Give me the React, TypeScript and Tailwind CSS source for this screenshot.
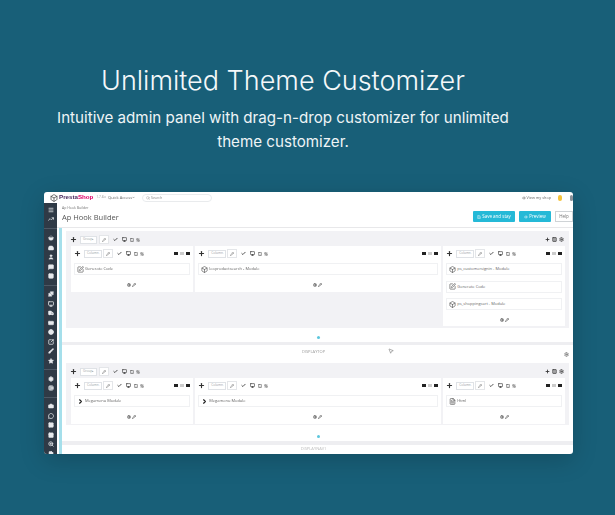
import { Check, ChevronDown, Cog, Eye, Monitor, Plus, Pencil, Save, Search, SquarePen, Tablet, ArrowUpDown, Box, ChevronRight, Settings, Menu, TrendingUp, ShoppingBasket, Inbox, User, MessageSquare, Table, Puzzle, Truck, CreditCard, Globe, SquareArrowOutUpRight, Brush, Star, Camera, MessageCircle, Image, Calendar, ZoomIn, FileText, Columns3, MousePointer2 } from 'lucide-react';
import type { ReactNode } from 'react';

const sidebar = [
  { icon: Menu, after: 0, solid: false },
  { icon: TrendingUp, after: 9, solid: false },
  { icon: ShoppingBasket, after: 0, solid: true },
  { icon: Inbox, after: 0, solid: true },
  { icon: User, after: 0, solid: true },
  { icon: MessageSquare, after: 0, solid: true },
  { icon: Table, after: 8, solid: true },
  { icon: Puzzle, after: 0, solid: true },
  { icon: Monitor, after: 0, solid: false },
  { icon: Truck, after: 0, solid: true },
  { icon: CreditCard, after: 0, solid: true },
  { icon: Globe, after: 0, solid: true },
  { icon: SquareArrowOutUpRight, after: 0, solid: false },
  { icon: Brush, after: 0, solid: true },
  { icon: Star, after: 8, solid: true },
  { icon: Settings, after: 0, solid: true },
  { icon: Cog, after: 8, solid: false },
  { icon: Camera, after: 0, solid: true },
  { icon: MessageCircle, after: 0, solid: false },
  { icon: Image, after: 0, solid: true },
  { icon: Calendar, after: 0, solid: true },
  { icon: ZoomIn, after: 0, solid: false },
  { icon: FileText, after: 0, solid: true },
  { icon: Table, after: 0, solid: true },
];

const Toolbar = ({ label, gap, pencil }: { label: string; gap: string; pencil: string }) => (
  <div className="flex items-center text-[#333]">
    <Plus size={7} strokeWidth={4} />
    <div className={`ml-[3px] flex h-[8px] items-center justify-between border border-[#dfe2e6] bg-white px-[2px] text-[3.2px] text-[#9a9fa5] ${gap}`}>
      {label}
      <ChevronDown size={3} strokeWidth={5} className="text-[#333]" />
    </div>
    <div className={`flex h-[9px] items-center justify-center border border-[#e4e6e9] bg-white ${pencil}`}>
      <Pencil size={4} />
    </div>
    <Check size={5} strokeWidth={4} className="ml-[4px]" />
    <Monitor size={5} strokeWidth={3} className="ml-[4px]" />
    <Tablet size={4} strokeWidth={3} className="ml-[3px]" />
    <ArrowUpDown size={4} strokeWidth={3} className="ml-[2px]" />
  </div>
);

const Row = ({ icon, children }: { icon: ReactNode; children: string }) => (
  <div className="flex h-[12px] items-center gap-px border border-[#f0f1f3] bg-white pl-[2px] text-[4px] font-medium text-[#666]">
    {icon}
    {children}
  </div>
);

const Column = ({ width, rows }: { width: string; rows: { icon: ReactNode; label: string }[] }) => (
  <div className={`flex flex-col bg-white px-[3px] pb-[2px] pt-[3px] ${width}`}>
    <div className="flex items-center justify-between">
      <Toolbar label="Column" gap="w-[18px]" pencil="ml-px w-[10px]" />
      <div className="flex items-center gap-[2px] text-[#222]">
        <div className="h-[3px] w-[4px] bg-[#222]" />
        <div className="h-[3px] w-[4px] bg-[#ccc]" />
        <div className="h-[3px] w-[4px] bg-[#222]" />
      </div>
    </div>
    <div className="mt-[5px] flex flex-col gap-[5.5px]">
      {rows.map((r, i) => (
        <Row key={i} icon={r.icon}>{r.label}</Row>
      ))}
    </div>
    <div className="mt-[8px] flex items-center justify-center gap-px pb-[2px] text-[#333]">
      <Settings size={4} strokeWidth={3} />
      <Pencil size={4} strokeWidth={3} />
    </div>
  </div>
);

const Group = ({ columns, className }: { columns: { width: string; rows: { icon: ReactNode; label: string }[] }[]; className: string }) => (
  <div className={`mx-[4px] bg-[#f2f2f5] px-[4px] pb-[2px] pt-[3px] ${className}`}>
    <div className="flex h-[11px] items-center justify-between pr-[1px]">
      <Toolbar label="Group" gap="w-[17px]" pencil="ml-[2px] w-[10px]" />
      <div className="flex items-center gap-[2px] text-[#333]">
        <Plus size={5} strokeWidth={4} />
        <Columns3 size={5} strokeWidth={3} />
        <Settings size={5} strokeWidth={3} />
      </div>
    </div>
    <div className="ml-px mt-px flex items-start gap-[2.5px]">
      {columns.map((c, i) => (
        <Column key={i} width={c.width} rows={c.rows} />
      ))}
    </div>
  </div>
);

const edit = <SquarePen size={7} className="text-[#444]" />;
const mod = <Box size={7} className="text-[#444]" />;
const chevron = <ChevronRight size={7} strokeWidth={4} className="text-[#222]" />;

const firstRow = [
  { width: 'w-[122px] h-[46px]', rows: [{ icon: edit, label: 'Generate Code' }] },
  { width: 'w-[246px] h-[46px]', rows: [{ icon: mod, label: 'leoproductsearch - Module' }] },
  {
    width: 'w-[122px] h-[80px]',
    rows: [
      { icon: mod, label: 'ps_customersignin - Module' },
      { icon: edit, label: 'Generate Code' },
      { icon: mod, label: 'ps_shoppingcart - Module' },
    ],
  },
];

const secondRow = [
  { width: 'w-[122px] h-[46px]', rows: [{ icon: chevron, label: 'Megamenu Module' }] },
  { width: 'w-[246px] h-[46px]', rows: [{ icon: chevron, label: 'Megamenu Module' }] },
  { width: 'w-[122px] h-[46px]', rows: [{ icon: <FileText size={7} className="text-[#444]" />, label: 'Html' }] },
];

export default function App() {
  return (
    <div className="h-[515px] w-[615px] overflow-hidden bg-[#185f78] font-['Inter',sans-serif] text-white">
      <div className="ml-[48px] w-[470px] pt-[61px] text-center">
        <h1 className="text-[27px] font-light leading-[40px] text-[#f4f8fa]">Unlimited Theme Customizer</h1>
        <p className="mt-[5px] text-[15.15px] font-normal leading-[24px] text-[#eef4f6]">
          Intuitive admin panel with drag-n-drop customizer for unlimited theme customizer.
        </p>
      </div>

      <div className="relative ml-[44px] mt-[38px] h-[262px] w-[529px] overflow-hidden rounded-[3px] bg-white font-['Open_Sans',sans-serif] shadow-[0_6px_24px_rgba(0,0,0,0.18)] blur-[0.45px]">
        <div className="flex h-[11px] items-center text-[#666]">
          <Box size={8} className="ml-[6px] text-[#333]" />
          <span className="ml-[1px] font-['Liberation_Sans',sans-serif] text-[6.2px] font-bold leading-none text-[#4a2a5e]">
            Presta<span className="text-[#df0067]">Shop</span>
          </span>
          <span className="ml-[3px] text-[3.2px] text-[#999]">1.7.8.x</span>
          <span className="ml-[2px] flex items-center text-[4px]">Quick Access<ChevronDown size={3} strokeWidth={4} /></span>
          <div className="ml-[7px] flex h-[8px] w-[70px] items-center gap-px rounded-full border border-[#e9ebed] pl-[3px] text-[3.5px] text-[#888]">
            <Search size={4} />Search
          </div>
          <span className="ml-auto flex items-center gap-px text-[3.8px]"><Eye size={4} />View my shop</span>
          <div className="ml-[7px] h-[6px] w-[4px] rounded-full bg-[#f5c33b]" />
          <div className="ml-[8px] h-[6px] w-[3px] rounded-full bg-[#8a9199]" />
        </div>

        <div className="flex h-[251px]">
          <div className="flex w-[13px] flex-col items-center overflow-hidden bg-[#2f3a46] pt-[2px] text-[#e6e9ec]">
            {sidebar.map((s, i) => (
              <div key={i} className="flex w-full flex-col items-center">
                <div className="flex h-[9.5px] items-center justify-center">
                  <s.icon size={6} strokeWidth={s.solid ? 2 : 3} fill={s.solid ? 'currentColor' : 'none'} />
                </div>
                {s.after > 0 && (
                  <div className="flex w-full items-center" style={{ height: s.after + 0.5 }}>
                    <div className="h-px w-full bg-[#4d5864]" />
                  </div>
                )}
              </div>
            ))}
          </div>

          <div className="flex min-w-0 flex-1 flex-col">
            <div className="flex h-[25px] border-b border-[#e8e8ea] pl-[5px]">
              <div>
                <div className="mt-[2px] text-[3.5px] leading-[5px] text-[#777]">Ap Hook Builder</div>
                <div className="mt-[1px] text-[7.5px] leading-[12px] text-[#555]">Ap Hook Builder</div>
              </div>
              <div className="ml-auto mt-[8px] flex gap-[4px] text-[4.5px]">
                <div className="flex h-[11px] w-[42px] items-center justify-center gap-px rounded-[1px] bg-[#25b9d7] text-white"><Save size={4} />Save and stay</div>
                <div className="flex h-[11px] w-[32px] items-center justify-center gap-px rounded-[1px] bg-[#25b9d7] text-white"><Eye size={4} />Preview</div>
                <div className="flex h-[11px] w-[18px] items-center justify-center border border-[#cfd3d6] text-[#777]">Help</div>
              </div>
            </div>

            <div className="flex min-h-0 flex-1 pl-[2px]">
              <div className="w-[3px] bg-[#a5dfeb]" />
              <div className="flex min-w-0 flex-1 flex-col">
                <Group columns={firstRow} className="mt-[3px] h-[98px]" />
                <div className="flex h-[15px] items-center justify-center pl-[2px] pt-[5px]">
                  <div className="h-[3px] w-[3px] rounded-full bg-[#5cc6dd]" />
                </div>
                <div className="h-[3px] bg-[#eeeef1]" />
                <div className="relative flex h-[19px] items-center justify-center pb-[4px] pr-[8px] text-[4px] text-[#999]">
                  DISPLAYTOP
                  <Settings size={5} strokeWidth={3} className="absolute right-[4px] top-[7px] text-[#666]" />
                </div>
                <Group columns={secondRow} className="h-[62px]" />
                <div className="flex h-[16px] items-center justify-center pl-[2px] pt-[6px]">
                  <div className="h-[3px] w-[3px] rounded-full bg-[#5cc6dd]" />
                </div>
                <div className="h-[4px] bg-[#eeeef1]" />
                <div className="flex h-[10px] items-center justify-center pr-[8px] text-[4px] text-[#bbb]">DISPLAYNAV1</div>
              </div>
            </div>
          </div>
        </div>
        <MousePointer2 size={6} className="absolute left-[344px] top-[156px] text-[#666]" />
      </div>
    </div>
  );
}
